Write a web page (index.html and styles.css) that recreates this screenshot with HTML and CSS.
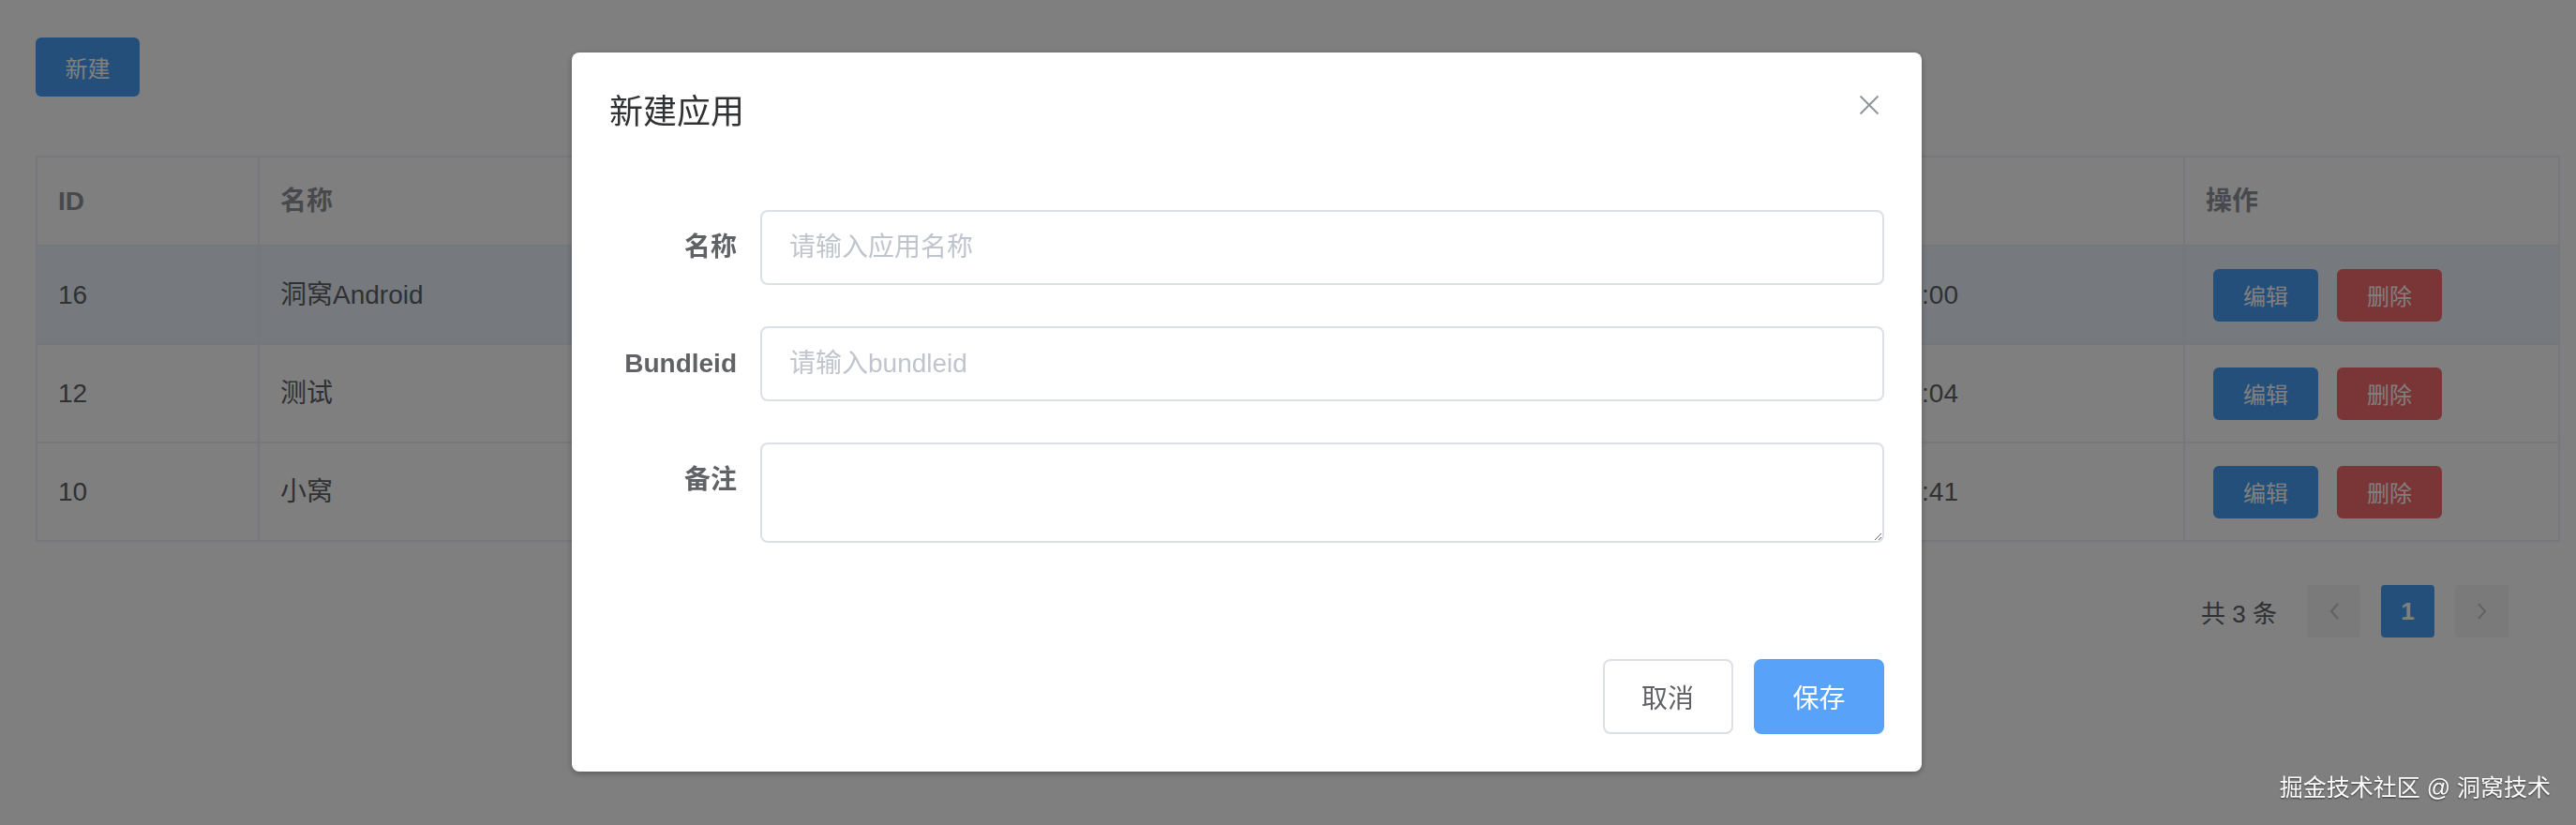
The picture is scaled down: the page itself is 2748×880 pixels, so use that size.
FILE: index.html
```html
<!DOCTYPE html>
<html lang="zh-CN">
<head>
  <meta charset="UTF-8" />
  <title>应用管理</title>
  <link rel="stylesheet" href="styles.css">
</head>
<body>

<div class="page">
  <button class="btn btn-primary btn-small">新建</button>

  <table class="grid">
    <colgroup>
      <col class="col-id" />
      <col class="col-name" />
      <col class="col-bundle" />
      <col class="col-remark" />
      <col class="col-time" />
      <col class="col-ops" />
    </colgroup>
    <thead>
      <tr>
        <th>ID</th>
        <th>名称</th>
        <th>Bundleid</th>
        <th>备注</th>
        <th>创建时间</th>
        <th>操作</th>
      </tr>
    </thead>
    <tbody>
      <tr class="current">
        <td>16</td>
        <td>洞窝Android</td>
        <td>com.dowell.android</td>
        <td>安卓客户端</td>
        <td>2021-07-14 15:21:00</td>
        <td class="ops">
          <button class="btn btn-primary btn-mini">编辑</button>
          <button class="btn btn-danger btn-mini">删除</button>
        </td>
      </tr>
      <tr>
        <td>12</td>
        <td>测试</td>
        <td>com.dowell.test</td>
        <td>测试应用</td>
        <td>2021-07-02 10:48:04</td>
        <td class="ops">
          <button class="btn btn-primary btn-mini">编辑</button>
          <button class="btn btn-danger btn-mini">删除</button>
        </td>
      </tr>
      <tr>
        <td>10</td>
        <td>小窝</td>
        <td>com.dowell.xiaowo</td>
        <td>小窝应用</td>
        <td>2021-06-28 09:16:41</td>
        <td class="ops">
          <button class="btn btn-primary btn-mini">编辑</button>
          <button class="btn btn-danger btn-mini">删除</button>
        </td>
      </tr>
    </tbody>
  </table>

  <div class="pager">
    <span class="pager-total">共 3 条</span>
    <button class="pager-btn" disabled>
      <svg width="12" height="20" viewBox="0 0 12 20"><path d="M10 2 L3 10 L10 18" fill="none" stroke="#c0c4cc" stroke-width="2"/></svg>
    </button>
    <button class="pager-btn active">1</button>
    <button class="pager-btn" disabled>
      <svg width="12" height="20" viewBox="0 0 12 20"><path d="M2 2 L9 10 L2 18" fill="none" stroke="#c0c4cc" stroke-width="2"/></svg>
    </button>
  </div>
</div>

<div class="mask"></div>

<div class="dialog-wrap">
  <div class="dialog">
    <div class="dialog-header">
      <span class="dialog-title">新建应用</span>
      <button class="dialog-close" aria-label="关闭">
        <svg width="32" height="32" viewBox="0 0 32 32"><path d="M6.5 6.5 L25.5 25.5 M25.5 6.5 L6.5 25.5" stroke="#909399" stroke-width="2" fill="none"/></svg>
      </button>
    </div>
    <div class="dialog-body">
      <form class="form">
        <div class="form-item">
          <label class="form-label">名称</label>
          <div class="form-content"><input class="input" type="text" placeholder="请输入应用名称" /></div>
        </div>
        <div class="form-item">
          <label class="form-label">Bundleid</label>
          <div class="form-content"><input class="input" type="text" placeholder="请输入bundleid" /></div>
        </div>
        <div class="form-item">
          <label class="form-label">备注</label>
          <div class="form-content"><textarea class="textarea"></textarea></div>
        </div>
      </form>
    </div>
    <div class="dialog-footer">
      <button class="btn btn-default btn-large">取消</button>
      <button class="btn btn-save btn-large">保存</button>
    </div>
  </div>
</div>

<div class="watermark">掘金技术社区 @ 洞窝技术</div>

</body>
</html>
```

FILE: styles.css
```css
* { box-sizing: border-box; }
body {
  margin: 0;
  padding: 0;
  background: #fff;
  font-family: 'Liberation Sans', 'Noto Sans CJK SC', sans-serif;
  color: #606266;
}
.page { padding: 40px 19px 0 38px; }

/* buttons */
.btn {
  display: inline-block;
  font-family: inherit;
  border: 2px solid transparent;
  border-radius: 6px;
  color: #fff;
  cursor: pointer;
  padding: 0 30px;
  margin: 0;
}
.btn + .btn { margin-left: 20px; }
.btn-primary { background: #4a9ff7; border-color: #4a9ff7; }
.btn-danger { background: #f56c6c; border-color: #f56c6c; }
.btn-small { display: block; height: 63px; width: 111px; padding: 0; font-size: 24px; }
.btn-mini { height: 56px; width: 112px; padding: 0; font-size: 24px; vertical-align: middle; }
.btn-large { height: 80px; width: 139px; padding: 0; font-size: 28px; border-radius: 8px; }
.btn-default { background: #fff; border-color: #dcdfe6; color: #606266; }
.btn-save { background: #58a2f9; border-color: #58a2f9; color: #fff; }

/* table */
.grid {
  width: 100%;
  margin-top: 63px;
  border-collapse: collapse;
  table-layout: fixed;
  border: 2px solid #ebeef5;
  font-size: 28px;
}
.col-id { width: 237px; }
.col-name { width: 510px; }
.col-bundle { width: 510px; }
.col-remark { width: 510px; }
.col-time { width: 524px; }
.col-ops { width: 400px; }
.grid th, .grid td {
  border: 2px solid #ebeef5;
  padding: 0 22px;
  text-align: left;
  white-space: nowrap;
  overflow: hidden;
  line-height: 46px;
}
.grid th { height: 95px; color: #909399; font-weight: bold; }
.grid td { height: 105px; color: #606266; }
.grid tr.current td { background: #ecf5ff; }
.grid td.ops { padding-left: 30px; font-size: 0; }

/* pagination */
.pager {
  display: flex;
  justify-content: flex-end;
  align-items: center;
  gap: 22px;
  margin-top: 46px;
  padding-right: 53px;
}
.pager-total { font-size: 26px; color: #606266; margin-right: 10px; }
.pager-btn {
  width: 57px;
  height: 56px;
  border: 0;
  border-radius: 4px;
  background: #f4f4f5;
  color: #606266;
  font-family: inherit;
  font-size: 26px;
  font-weight: bold;
  display: flex;
  align-items: center;
  justify-content: center;
  padding: 0;
}
.pager-btn.active { background: #4a9ff7; color: #fff; }

/* modal */
.mask {
  position: fixed;
  top: 0; left: 0; right: 0; bottom: 0;
  background: rgba(0, 0, 0, 0.5);
}
.dialog-wrap {
  position: fixed;
  top: 0; left: 0; right: 0; bottom: 0;
  overflow: hidden;
}
.dialog {
  position: relative;
  width: 1440px;
  margin: 56px 0 0 610px;
  background: #fff;
  border-radius: 8px;
  box-shadow: 0 2px 6px rgba(0, 0, 0, 0.3);
}
.dialog-header { padding: 40px 40px 20px; }
.dialog-title { font-size: 36px; line-height: 48px; color: #303133; display: block; }
.dialog-close {
  position: absolute;
  top: 40px;
  right: 40px;
  width: 32px;
  height: 32px;
  padding: 0;
  border: 0;
  background: none;
  cursor: pointer;
}
.dialog-close svg { display: block; }
.dialog-body { padding: 60px 40px; }
.form-item { display: flex; margin-bottom: 44px; }
.form-label {
  width: 161px;
  flex: none;
  text-align: right;
  padding-right: 25px;
  font-size: 28px;
  font-weight: bold;
  line-height: 80px;
  color: #606266;
}
.form-content { flex: 1; }
.input, .textarea {
  display: block;
  width: 100%;
  border: 2px solid #dcdfe6;
  border-radius: 8px;
  font-family: inherit;
  font-size: 28px;
  color: #606266;
  padding: 0 29px;
  outline: none;
}
.input { height: 80px; }
.textarea { height: 107px; padding: 10px 29px; resize: vertical; }
.input::placeholder { color: #c0c4cc; }
.dialog-footer { padding: 20px 40px 40px; text-align: right; }
.dialog-footer .btn + .btn { margin-left: 18px; }

.watermark {
  position: fixed;
  right: 27px;
  top: 822px;
  font-size: 25px;
  line-height: 36px;
  color: #fff;
  text-shadow: 0 1px 2px rgba(0, 0, 0, 0.6);
}
```
